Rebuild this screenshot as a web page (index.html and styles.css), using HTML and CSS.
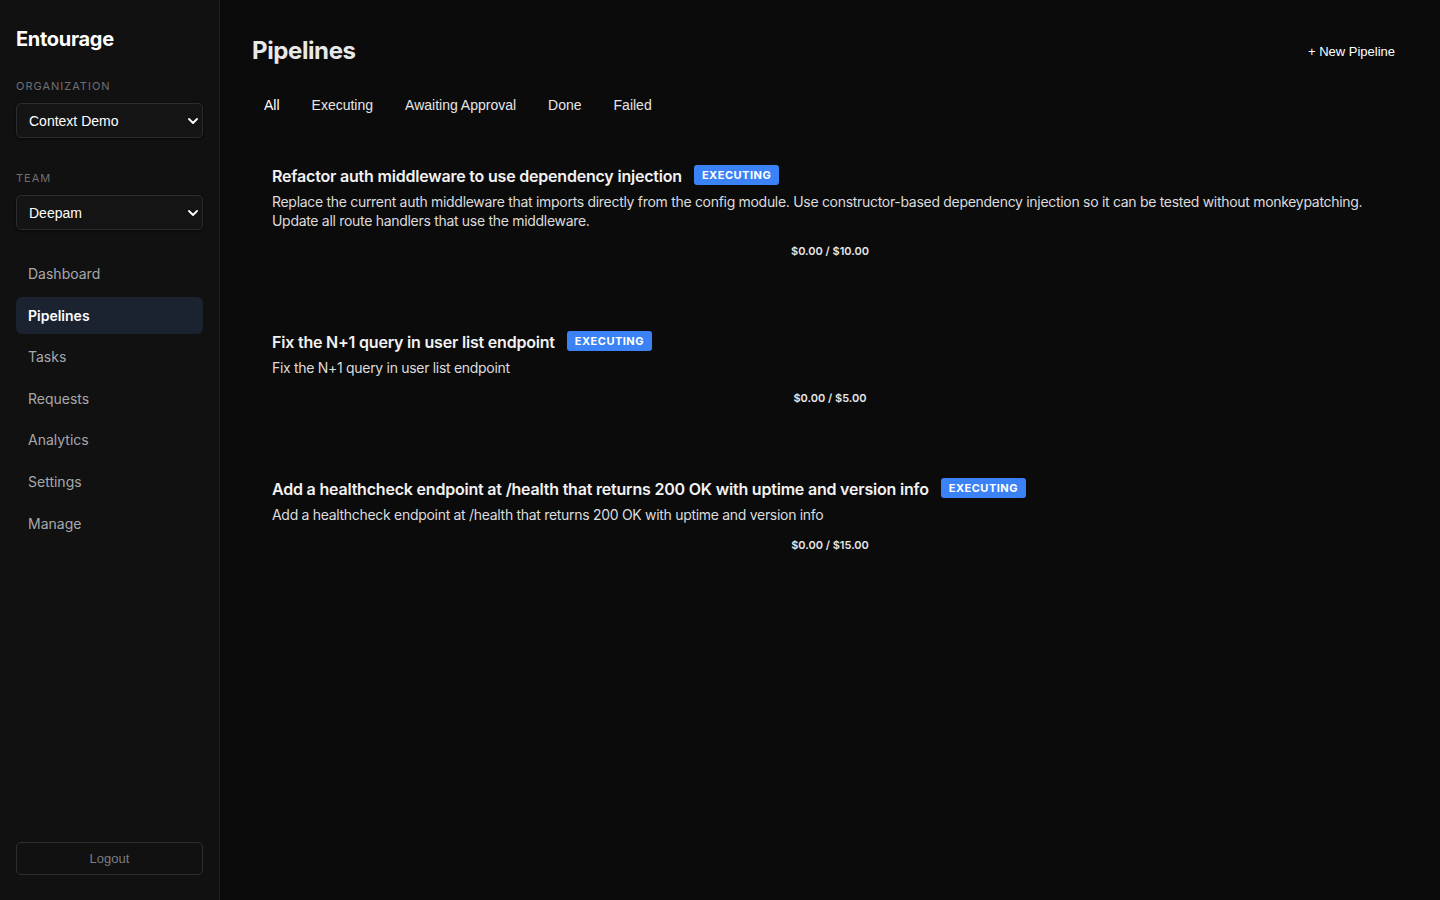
FILE: index.html
```html
<!DOCTYPE html>
<html lang="en">
<head>
  <meta charset="UTF-8">
  <meta name="viewport" content="width=device-width, initial-scale=1.0">
  <title>Pipelines - Entourage</title>
  <link rel="stylesheet" href="styles.css">
</head>
<body>
  <aside class="sidebar">
    <div class="brand">Entourage</div>

    <div class="field">
      <label class="field-label">Organization</label>
      <div class="select-wrap">
        <select class="select">
          <option>Context Demo</option>
        </select>
        <svg class="chevron" viewBox="0 0 10 6" width="10" height="6"><path d="M1 1l4 4 4-4" fill="none" stroke="#fff" stroke-width="1.8" stroke-linecap="round" stroke-linejoin="round"/></svg>
      </div>
    </div>

    <div class="field">
      <label class="field-label">Team</label>
      <div class="select-wrap">
        <select class="select">
          <option>Deepam</option>
        </select>
        <svg class="chevron" viewBox="0 0 10 6" width="10" height="6"><path d="M1 1l4 4 4-4" fill="none" stroke="#fff" stroke-width="1.8" stroke-linecap="round" stroke-linejoin="round"/></svg>
      </div>
    </div>

    <nav class="nav">
      <a class="nav-item" href="#">Dashboard</a>
      <a class="nav-item active" href="#">Pipelines</a>
      <a class="nav-item" href="#">Tasks</a>
      <a class="nav-item" href="#">Requests</a>
      <a class="nav-item" href="#">Analytics</a>
      <a class="nav-item" href="#">Settings</a>
      <a class="nav-item" href="#">Manage</a>
    </nav>

    <button class="logout">Logout</button>
  </aside>

  <main class="main">
    <header class="page-header">
      <h1 class="page-title">Pipelines</h1>
      <button class="new-btn">+ New Pipeline</button>
    </header>

    <div class="tabs">
      <button class="tab active">All</button>
      <button class="tab">Executing</button>
      <button class="tab">Awaiting Approval</button>
      <button class="tab">Done</button>
      <button class="tab">Failed</button>
    </div>

    <div class="pipeline-list">
      <div class="pipeline">
        <div class="pipeline-head">
          <span class="pipeline-title">Refactor auth middleware to use dependency injection</span>
          <span class="badge">Executing</span>
        </div>
        <p class="pipeline-desc">Replace the current auth middleware that imports directly from the config module. Use constructor-based dependency injection so it can be tested without monkeypatching. Update all route handlers that use the middleware.</p>
        <div class="pipeline-cost">$0.00 / $10.00</div>
      </div>

      <div class="pipeline">
        <div class="pipeline-head">
          <span class="pipeline-title">Fix the N+1 query in user list endpoint</span>
          <span class="badge">Executing</span>
        </div>
        <p class="pipeline-desc">Fix the N+1 query in user list endpoint</p>
        <div class="pipeline-cost">$0.00 / $5.00</div>
      </div>

      <div class="pipeline">
        <div class="pipeline-head">
          <span class="pipeline-title">Add a healthcheck endpoint at /health that returns 200 OK with uptime and version info</span>
          <span class="badge">Executing</span>
        </div>
        <p class="pipeline-desc">Add a healthcheck endpoint at /health that returns 200 OK with uptime and version info</p>
        <div class="pipeline-cost">$0.00 / $15.00</div>
      </div>
    </div>
  </main>
</body>
</html>
```

FILE: styles.css
```css
body {
  margin: 0;
  height: 100vh;
  display: flex;
  font-family: Inter, "Noto Sans", sans-serif;
  background-color: #0b0b0c;
  color: #ededed;
  overflow: hidden;
}

/* Sidebar */
.sidebar {
  width: 187px;
  flex-shrink: 0;
  padding: 24px 16px 24px 16px;
  background-color: #111112;
  border-right: 1px solid #1f1f21;
  display: flex;
  flex-direction: column;
}

.brand {
  font-size: 20px;
  font-weight: 700;
  color: #ffffff;
  letter-spacing: -0.3px;
  line-height: 30px;
  margin-bottom: 25px;
}

.field {
  margin-bottom: 33px;
}

.field + .field {
  margin-bottom: 25px;
}

.field-label {
  display: block;
  font-size: 11px;
  text-transform: uppercase;
  letter-spacing: 1px;
  color: #6f6f72;
  line-height: 14px;
  margin-bottom: 10px;
}

.select-wrap {
  position: relative;
}

.select {
  width: 100%;
  height: 35px;
  appearance: none;
  -webkit-appearance: none;
  background-color: #141415;
  border: 1px solid #2c2c2e;
  border-radius: 5px;
  color: #ffffff;
  font-family: "Liberation Sans", Arial, sans-serif;
  font-size: 14px;
  padding: 0 12px;
  box-shadow: 0 1px 3px rgba(0, 0, 0, 0.6);
}

.chevron {
  position: absolute;
  right: 5px;
  top: 15px;
  pointer-events: none;
}

.nav {
  display: flex;
  flex-direction: column;
  gap: 4px;
}

.nav-item {
  display: block;
  padding: 0 12px;
  height: 37.6px;
  line-height: 37.6px;
  border-radius: 6px;
  color: #a8a8ab;
  font-size: 14px;
  text-decoration: none;
}

.nav-item.active {
  background-color: #1b2331;
  color: #ffffff;
  font-weight: 600;
}

.logout {
  margin-top: auto;
  height: 33px;
  background: transparent;
  border: 1px solid #2e2e30;
  border-radius: 5px;
  color: #7c7c80;
  font-family: "Liberation Sans", Arial, sans-serif;
  font-size: 13px;
  position: relative;
  top: -1px;
}

/* Main */
.main {
  flex: 1;
  padding: 26px 32px;
  min-width: 0;
}

.page-header {
  display: flex;
  justify-content: space-between;
  align-items: center;
  margin-bottom: 13px;
}

.page-title {
  margin: 0;
  font-size: 24px;
  font-weight: 700;
  color: #e8e8e8;
  letter-spacing: -0.4px;
  line-height: 50px;
}

.new-btn {
  background: transparent;
  border: none;
  color: #ffffff;
  font-family: "Liberation Sans", Arial, sans-serif;
  font-size: 13px;
  padding: 8px 13px;
}

.tabs {
  display: flex;
  gap: 8px;
  margin-bottom: 23px;
}

.tab {
  background: transparent;
  border: none;
  color: #e6e6e6;
  font-family: "Liberation Sans", Arial, sans-serif;
  font-size: 14px;
  padding: 8px 12px;
  border-radius: 6px;
}

.tab.active {
  color: #ffffff;
}

.pipeline {
  padding: 20px;
  margin-bottom: 31px;
}

.pipeline-head {
  display: flex;
  align-items: center;
  gap: 12px;
  height: 24px;
}

.pipeline-title {
  font-size: 16px;
  font-weight: 600;
  color: #f2f2f2;
  letter-spacing: -0.2px;
}

.badge {
  background-color: #3b82f6;
  color: #ffffff;
  font-size: 11px;
  font-weight: 700;
  text-transform: uppercase;
  letter-spacing: 0.5px;
  padding: 2px 8px;
  line-height: 16px;
  border-radius: 3px;
  position: relative;
  top: -1px;
}

.pipeline-desc {
  margin: 4px 0 0;
  font-size: 14px;
  line-height: 19px;
  letter-spacing: -0.3px;
  color: #dcdcdc;
}

.pipeline-cost {
  margin-top: 13px;
  text-align: center;
  font-size: 11px;
  font-weight: 600;
  line-height: 16px;
  color: #e6e6e6;
}
```
